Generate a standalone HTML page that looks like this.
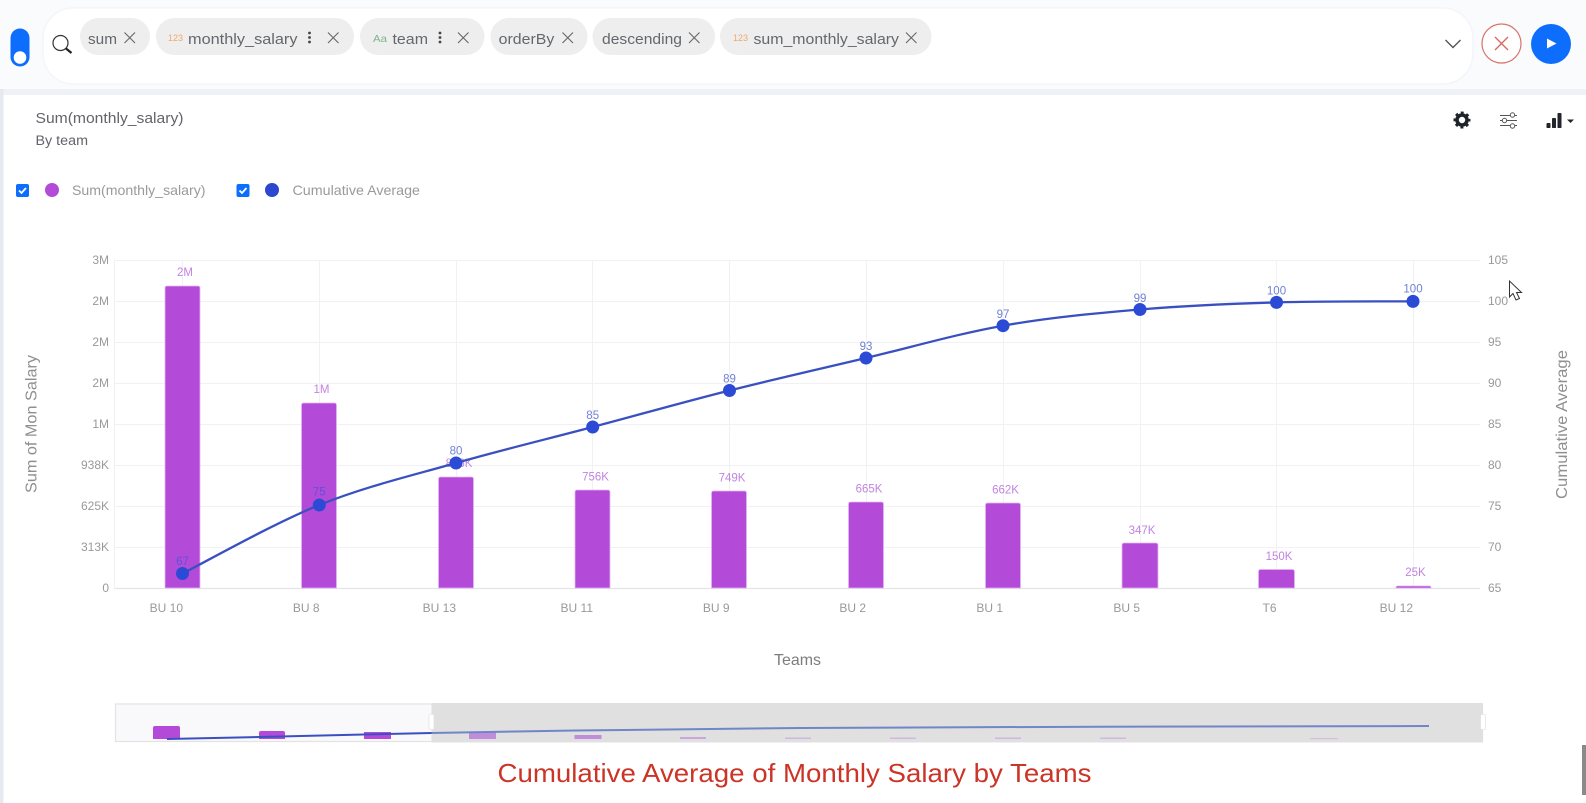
<!DOCTYPE html>
<html><head><meta charset="utf-8"><style>
html,body{margin:0;padding:0;width:1586px;height:803px;overflow:hidden;background:#fff}
svg{display:block}
text{font-family:"Liberation Sans",sans-serif}
.chip{font-size:14.5px;fill:#64686c}
.ax{font-size:12px;fill:#999}
.vl{font-size:11.5px;fill:#c184e0;text-anchor:middle}
.ll{font-size:11.5px;fill:#6f82d4;text-anchor:middle}
.x{stroke:#666;stroke-width:1.1;fill:none}
.g{stroke:#f1f1f4;stroke-width:1}
</style></head><body>
<svg width="1586" height="803" viewBox="0 0 1586 803" xmlns="http://www.w3.org/2000/svg">
<rect width="1586" height="803" fill="#fff"/>
<rect width="1586" height="89" fill="#fafbfd"/>
<rect y="89" width="1586" height="6" fill="#eff1f8"/>
<rect y="89" width="3.5" height="714" fill="#e6e9f0"/>
<rect x="3.5" y="95" width="1580" height="708" rx="6" fill="#fff"/>
<rect x="43" y="8" width="1430" height="76" rx="30" fill="#fff" stroke="#f3f5fb" stroke-width="1.5"/>

<!-- toggle -->
<rect x="10.500" y="28.500" width="19" height="38" rx="9.5" fill="#0d6efd"/>
<circle cx="20" cy="57.500" r="6.300" fill="#fff"/>
<!-- search -->
<circle cx="60.500" cy="43" r="7.500" fill="none" stroke="#333" stroke-width="1.200"/>
<path d="M66 48.500L71.500 53" stroke="#222" stroke-width="2.200" fill="none"/>

<!-- chips -->
<g fill="#eeeeee">
<rect x="80" y="18" width="70" height="37" rx="18.5"/>
<rect x="156" y="18" width="198" height="37" rx="18.5"/>
<rect x="360" y="18" width="124.500" height="37" rx="18.5"/>
<rect x="490.500" y="18" width="97" height="37" rx="18.5"/>
<rect x="592.500" y="18" width="122.500" height="37" rx="18.5"/>
<rect x="720" y="18" width="211.500" height="37" rx="18.5"/>
</g>
<text class="chip" x="88" y="44" textLength="29" lengthAdjust="spacingAndGlyphs">sum</text>
<path class="x" d="M124.500 32.500L135 43M135 32.500L124.500 43"/>
<text x="168" y="41" font-size="9.500" fill="#f0a868" textLength="15" lengthAdjust="spacingAndGlyphs">123</text>
<text class="chip" x="188" y="44" textLength="109.500" lengthAdjust="spacingAndGlyphs">monthly_salary</text>
<g fill="#444"><circle cx="309.500" cy="33" r="1.400"/><circle cx="309.500" cy="37.500" r="1.400"/><circle cx="309.500" cy="42" r="1.400"/></g>
<path class="x" d="M328 32.500L338.500 43M338.500 32.500L328 43"/>
<text x="373" y="42" font-size="10.500" fill="#7fb58a" textLength="14" lengthAdjust="spacingAndGlyphs">Aa</text>
<text class="chip" x="392.500" y="44" textLength="35.500" lengthAdjust="spacingAndGlyphs">team</text>
<g fill="#444"><circle cx="440" cy="33" r="1.400"/><circle cx="440" cy="37.500" r="1.400"/><circle cx="440" cy="42" r="1.400"/></g>
<path class="x" d="M458 32.500L468.500 43M468.500 32.500L458 43"/>
<text class="chip" x="498.700" y="44" textLength="55.600" lengthAdjust="spacingAndGlyphs">orderBy</text>
<path class="x" d="M562.500 32.500L573 43M573 32.500L562.500 43"/>
<text class="chip" x="602" y="44" textLength="80" lengthAdjust="spacingAndGlyphs">descending</text>
<path class="x" d="M689 32.500L699.500 43M699.500 32.500L689 43"/>
<text x="733" y="41" font-size="9.500" fill="#f0a868" textLength="15" lengthAdjust="spacingAndGlyphs">123</text>
<text class="chip" x="753.500" y="44" textLength="145.500" lengthAdjust="spacingAndGlyphs">sum_monthly_salary</text>
<path class="x" d="M906 32.500L916.500 43M916.500 32.500L906 43"/>

<!-- right controls -->
<path d="M1445.500 40L1453 47.500L1460.500 40" fill="none" stroke="#555" stroke-width="1.400"/>
<circle cx="1501.500" cy="43.500" r="19.500" fill="#fff" stroke="#d9736b" stroke-width="1.200"/>
<path d="M1495 37L1508 50M1508 37L1495 50" stroke="#d9665c" stroke-width="1.300" fill="none"/>
<circle cx="1551" cy="44" r="20" fill="#0d6efd"/>
<path d="M1547 38.500L1556.500 43.500L1547 48.500Z" fill="#fff"/>

<!-- titles -->
<text x="35.500" y="123" font-size="15" fill="#63636b" textLength="148" lengthAdjust="spacingAndGlyphs">Sum(monthly_salary)</text>
<text x="35.500" y="145" font-size="13.500" fill="#63636b" textLength="52.500" lengthAdjust="spacingAndGlyphs">By team</text>

<!-- toolbar icons -->
<circle cx="1462" cy="120" r="5" fill="none" stroke="#1d232b" stroke-width="3.600"/>
<circle cx="1462" cy="120" r="7.300" fill="none" stroke="#1d232b" stroke-width="2.400" stroke-dasharray="2.900 2.833" stroke-dashoffset="1.450"/>
<g stroke="#555" stroke-width="1" fill="#fff">
<path d="M1500 115.500h17M1500 120.500h17M1500 125.500h17" fill="none"/>
<circle cx="1512.500" cy="115" r="2.200"/><circle cx="1504.500" cy="120.500" r="2.200"/><circle cx="1512.500" cy="126" r="2.200"/>
</g>
<g fill="#22262c">
<rect x="1546.500" y="123" width="4" height="5" rx=".8"/>
<rect x="1552" y="118" width="4" height="10" rx=".8"/>
<rect x="1557.500" y="113" width="4" height="15" rx=".8"/>
<path d="M1567 119.500h7l-3.500 3.500z"/>
</g>

<!-- legend -->
<rect x="16" y="184" width="13" height="13" rx="2" fill="#0d6efd"/>
<path d="M19 190.500l2.500 2.500 4.500-5" stroke="#fff" stroke-width="1.800" fill="none"/>
<circle cx="52" cy="190" r="7" fill="#b44bd8"/>
<text x="72" y="195" font-size="14" fill="#9a9a9a" textLength="133.500" lengthAdjust="spacingAndGlyphs">Sum(monthly_salary)</text>
<rect x="236.500" y="184" width="13" height="13" rx="2" fill="#0d6efd"/>
<path d="M239.500 190.500l2.500 2.500 4.500-5" stroke="#fff" stroke-width="1.800" fill="none"/>
<circle cx="272" cy="190" r="7" fill="#2b48cf"/>
<text x="292.500" y="195" font-size="14" fill="#9a9a9a" textLength="127.500" lengthAdjust="spacingAndGlyphs">Cumulative Average</text>

<!-- grid -->
<g class="g">
<path d="M114.500 260.500H1480M114.500 301.500H1480M114.500 342.500H1480M114.500 383.500H1480M114.500 424.500H1480M114.500 465.500H1480M114.500 506.500H1480M114.500 547.500H1480"/>
<path d="M114.500 260V588M182.500 260V588M319.500 260V588M456.500 260V588M592.500 260V588M729.500 260V588M866.500 260V588M1003.500 260V588M1140.500 260V588M1276.500 260V588M1413.500 260V588"/>
</g>
<path d="M114.500 588.500H1480" stroke="#e4e4e8" stroke-width="1.200"/>

<!-- y labels -->
<g class="ax" text-anchor="end">
<text x="109" y="264">3M</text><text x="109" y="305">2M</text><text x="109" y="346">2M</text><text x="109" y="387">2M</text>
<text x="109" y="428">1M</text><text x="109" y="469">938K</text><text x="109" y="510">625K</text><text x="109" y="551">313K</text><text x="109" y="592">0</text>
</g>
<g class="ax">
<text x="1488" y="264">105</text><text x="1488" y="305">100</text><text x="1488" y="346">95</text><text x="1488" y="387">90</text>
<text x="1488" y="428">85</text><text x="1488" y="469">80</text><text x="1488" y="510">75</text><text x="1488" y="551">70</text><text x="1488" y="592">65</text>
</g>

<!-- x labels -->
<g class="ax" text-anchor="end">
<text x="183" y="612">BU 10</text><text x="319.500" y="612">BU 8</text><text x="456" y="612">BU 13</text><text x="593" y="612">BU 11</text><text x="729.500" y="612">BU 9</text>
<text x="866" y="612">BU 2</text><text x="1003" y="612">BU 1</text><text x="1140" y="612">BU 5</text><text x="1276.500" y="612">T6</text><text x="1413" y="612">BU 12</text>
</g>

<!-- axis titles -->
<text transform="translate(36.500 493) rotate(-90)" font-size="16" fill="#8f8f8f" textLength="138" lengthAdjust="spacingAndGlyphs">Sum of Mon Salary</text>
<text transform="translate(1567 499) rotate(-90)" font-size="16" fill="#8f8f8f" textLength="149" lengthAdjust="spacingAndGlyphs">Cumulative Average</text>
<text x="774" y="665" font-size="16" fill="#7d7d7d" textLength="47" lengthAdjust="spacingAndGlyphs">Teams</text>

<!-- bars -->
<g fill="#b44bd8" stroke="#e3b5f2" stroke-width=".8">
<path d="M165 588V288a2 2 0 0 1 2-2h31a2 2 0 0 1 2 2V588Z"/>
<path d="M301.500 588V405a2 2 0 0 1 2-2h31a2 2 0 0 1 2 2V588Z"/>
<path d="M438.500 588V479a2 2 0 0 1 2-2h31a2 2 0 0 1 2 2V588Z"/>
<path d="M575 588V492a2 2 0 0 1 2-2h31a2 2 0 0 1 2 2V588Z"/>
<path d="M711.500 588V493a2 2 0 0 1 2-2h31a2 2 0 0 1 2 2V588Z"/>
<path d="M848.500 588V504a2 2 0 0 1 2-2h31a2 2 0 0 1 2 2V588Z"/>
<path d="M985.500 588V505a2 2 0 0 1 2-2h31a2 2 0 0 1 2 2V588Z"/>
<path d="M1122 588V545a2 2 0 0 1 2-2h32a2 2 0 0 1 2 2V588Z"/>
<path d="M1258.500 588V571.500a2 2 0 0 1 2-2h32a2 2 0 0 1 2 2V588Z"/>
<path d="M1396 588V587.500a1.500 1.500 0 0 1 1.500-1.500h32a1.500 1.500 0 0 1 1.500 1.500V588Z"/>
</g>

<!-- bar labels -->
<text class="vl" x="185" y="276">2M</text><text class="vl" x="321.500" y="393">1M</text><text class="vl" x="459" y="467">866K</text>
<text class="vl" x="595.500" y="480.500">756K</text><text class="vl" x="732" y="481.500">749K</text><text class="vl" x="869" y="492.500">665K</text>
<text class="vl" x="1005.500" y="493.500">662K</text><text class="vl" x="1142" y="534">347K</text><text class="vl" x="1279" y="560">150K</text><text class="vl" x="1415.500" y="576">25K</text>

<!-- line -->
<path d="M182.500 573.500C205.300 562 273.700 523.400 319.300 505C365 486.600 410.400 476 456 463C501.600 450 547.100 439.100 592.700 427C638.300 414.900 684 402 729.500 390.500C775 379 820.500 368.800 866 358C911.500 347.200 957.500 333.800 1003 325.700C1048.500 317.600 1094.500 313.400 1140 309.500C1185.500 305.600 1231 303.750 1276.500 302.400C1322 301.050 1367.500 301.400 1413 301.400" fill="none" stroke="#3a50c0" stroke-width="2.300"/>
<g fill="#2b4bd6">
<circle cx="182.500" cy="573.500" r="6.500"/><circle cx="319.300" cy="505" r="6.500"/><circle cx="456" cy="463" r="6.500"/><circle cx="592.700" cy="427" r="6.500"/><circle cx="729.500" cy="390.500" r="6.500"/>
<circle cx="866" cy="358" r="6.500"/><circle cx="1003" cy="325.700" r="6.500"/><circle cx="1140" cy="309.500" r="6.500"/><circle cx="1276.500" cy="302.400" r="6.500"/><circle cx="1413" cy="301.400" r="6.500"/>
</g>
<text class="ll" x="182.500" y="565" style="fill:#5d52d8">67</text><text class="ll" x="319.300" y="495.500" style="fill:#5d52d8">75</text><text class="ll" x="456" y="454.500">80</text><text class="ll" x="592.700" y="419">85</text><text class="ll" x="729.500" y="382.500">89</text>
<text class="ll" x="866" y="350">93</text><text class="ll" x="1003" y="318">97</text><text class="ll" x="1140" y="302">99</text><text class="ll" x="1276.500" y="294.500">100</text><text class="ll" x="1413" y="292.500">100</text>

<!-- cursor -->
<path d="M1509.500 281V297L1513 293.500L1516 300L1519.500 298.500L1516.500 292.500H1521.500Z" fill="#fff" stroke="#333" stroke-width="1"/>

<!-- minimap -->
<rect x="115.500" y="704" width="1367" height="37.500" fill="#f9f9fb" stroke="#e3e3e6" stroke-width="1.200"/>
<g fill="#b44bd8">
<path d="M153 739V728a2 2 0 0 1 2-2h23a2 2 0 0 1 2 2v11Z"/>
<path d="M259 739V733a2 2 0 0 1 2-2h22a2 2 0 0 1 2 2v6Z"/>
<path d="M364 739V732h27v7Z"/>
</g>
<rect x="431.500" y="703" width="1051.500" height="39.500" fill="#e0e0e0"/>
<g fill="#c08ed8">
<rect x="469" y="732" width="27" height="7"/><rect x="574.500" y="735" width="27" height="4"/>
<rect x="680" y="737" width="26" height="2" opacity=".7"/><rect x="785" y="737.500" width="26" height="1.500" opacity=".5"/><rect x="890" y="737.500" width="26" height="1.500" opacity=".5"/><rect x="995" y="737.500" width="26" height="1.500" opacity=".5"/><rect x="1100" y="737.500" width="26" height="1.500" opacity=".5"/><rect x="1310" y="738" width="28" height="1.200" opacity=".4"/>
</g>
<path d="M167 739L259 737L364 734.500L431.500 733" fill="none" stroke="#3a50c0" stroke-width="2"/>
<path d="M431.500 733L575 730.500L800 728L1100 726.700L1429 726" fill="none" stroke="#6f86c9" stroke-width="2"/>
<rect x="429" y="714.500" width="5" height="15" rx="1" fill="#fff" stroke="#ddd" stroke-width=".6"/>
<rect x="1480.500" y="714.500" width="5" height="15" rx="1" fill="#fff" stroke="#ddd" stroke-width=".6"/>

<!-- bottom title -->
<text x="497.500" y="782" font-size="26" fill="#cb3426" textLength="594" lengthAdjust="spacingAndGlyphs">Cumulative Average of Monthly Salary by Teams</text>

<!-- scrollbar -->
<rect x="1582" y="745" width="4" height="50" fill="#8a8a8a"/>
</svg>
</body></html>
